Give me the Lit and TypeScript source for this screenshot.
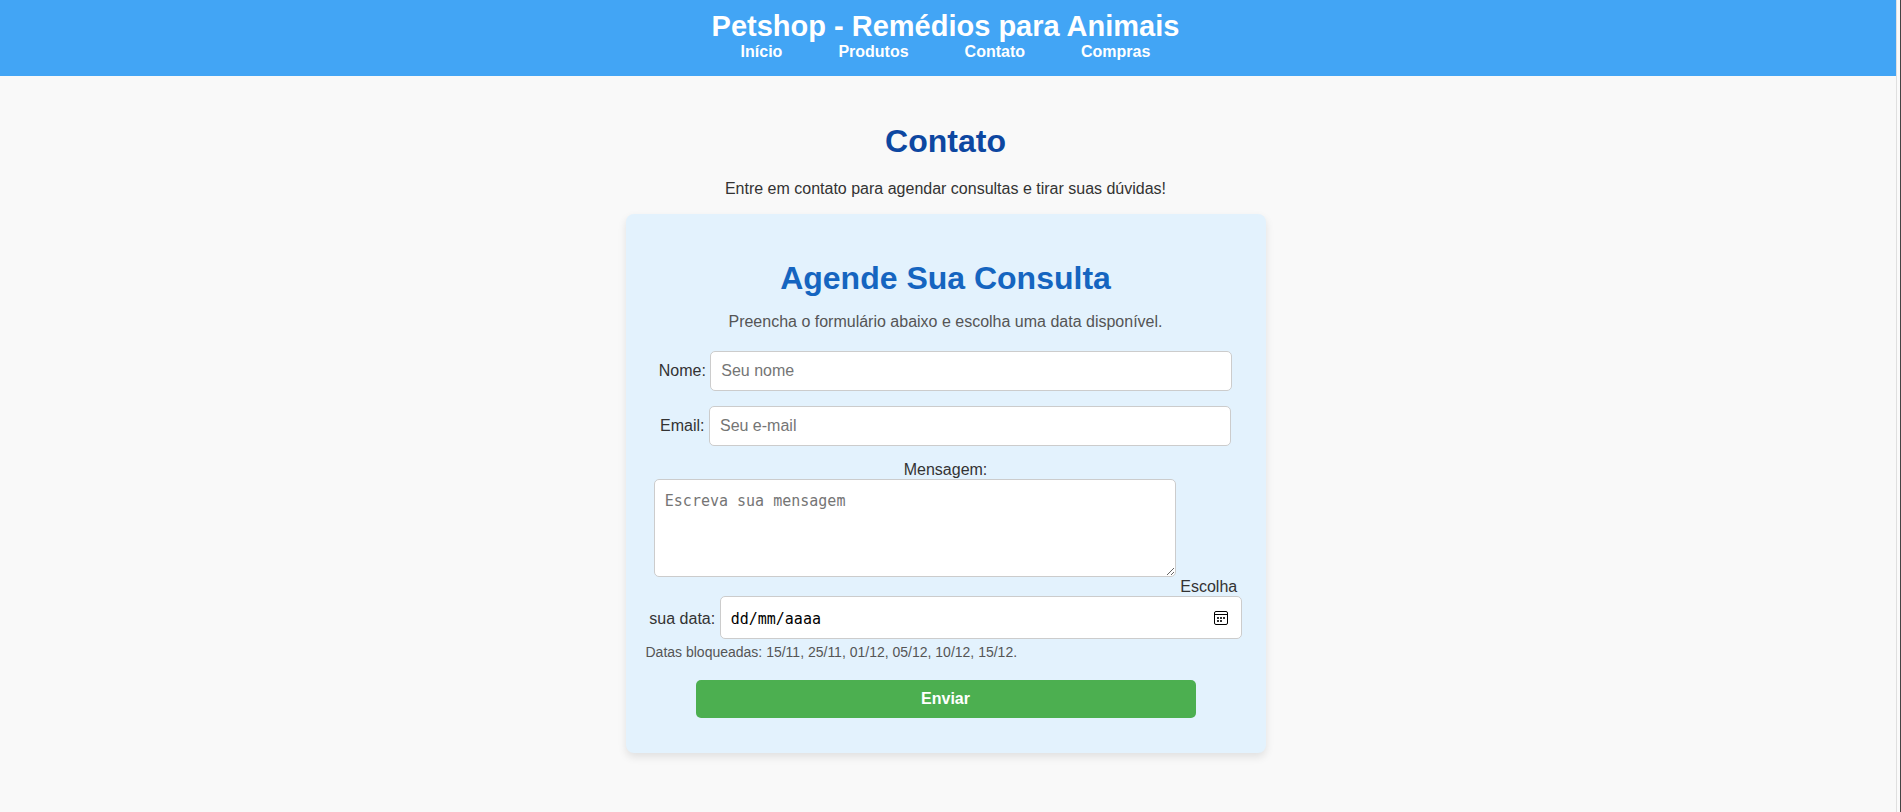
import { LitElement, html, css } from "lit";
import { customElement } from "lit/decorators.js";

@customElement("app-root")
export class AppRoot extends LitElement {
  static styles = css`
    :host {
      display: flex;
      min-height: 100vh;
      font: 16px "Liberation Sans", Arial, sans-serif;
      color: #333;
      background: #f9f9f9;
    }
    .page {
      flex: 1;
      text-align: center;
    }
    .edge {
      width: 1px;
      border-left: 1px solid #e0e0e0;
      border-right: 1px solid #444;
      padding-right: 2px;
      background: #fafafa;
    }
    header {
      padding: 10px 5px 15px 0;
      background: #42a5f5;
      color: #fff;
    }
    .brand {
      margin: 0;
      font-size: 29px;
      line-height: 33px;
    }
    nav {
      display: flex;
      justify-content: center;
      gap: 56px;
      line-height: 18px;
    }
    nav a {
      color: #fff;
      font-weight: bold;
      text-decoration: none;
    }
    main {
      padding: 20px 5px 20px 0;
    }
    .title,
    .form-title {
      font-size: 32px;
      line-height: 37px;
    }
    .title {
      margin: 27px 0 20px;
      color: #0d47a1;
    }
    .lead {
      margin: 0 0 16px;
      line-height: 18px;
    }
    .card {
      box-sizing: border-box;
      max-width: 640px;
      margin: 0 auto;
      padding: 20px;
      border-radius: 8px;
      background: #e3f2fd;
      box-shadow: 0 4px 8px rgba(0, 0, 0, 0.1);
    }
    .form-title {
      margin: 26px 0 16px;
      color: #1565c0;
    }
    .hint {
      margin: 0 0 20px;
      line-height: 18px;
      color: #555;
    }
    .field {
      box-sizing: border-box;
      width: 522px;
      max-width: 100%;
      margin: 0 0 15px;
      padding: 10px;
      border: 1px solid #ccc;
      border-radius: 5px;
      background: #fff;
      font: inherit;
      line-height: 18px;
    }
    input.field {
      height: 40px;
    }
    .field.mono {
      font-family: "DejaVu Sans Mono", monospace;
      font-size: 15px;
      line-height: 22px;
    }
    textarea.field {
      height: 98px;
    }
    .date-box {
      position: relative;
      display: inline-block;
    }
    input.date {
      height: 43px;
      padding-top: 12px;
    }
    .date::placeholder {
      color: #000;
    }
    .picker {
      position: absolute;
      top: 14px;
      right: 13px;
      width: 16px;
      height: 16px;
      padding: 0;
      border: 0;
      background: none;
    }
    .picker svg {
      display: block;
    }
    .blocked {
      margin: -10px 0 20px;
      font-size: 14px;
      line-height: 16px;
      text-align: left;
      color: #555;
    }
    .send {
      display: block;
      width: 500px;
      max-width: 100%;
      margin: 0 auto 15px;
      padding: 10px;
      border: 0;
      border-radius: 5px;
      background: #4caf50;
      color: #fff;
      font: bold 16px "Liberation Sans", Arial, sans-serif;
      line-height: 18px;
    }
  `;

  render() {
    return html`
      <div class="page">
        <header>
          <h1 class="brand">Petshop - Remédios para Animais</h1>
          <nav>
            <a href="#inicio">Início</a>
            <a href="#produtos">Produtos</a>
            <a href="#contato">Contato</a>
            <a href="#compras">Compras</a>
          </nav>
        </header>
        <main>
          <h1 class="title">Contato</h1>
          <p class="lead">Entre em contato para agendar consultas e tirar suas dúvidas!</p>
          <section class="card">
            <h2 class="form-title">Agende Sua Consulta</h2>
            <p class="hint">Preencha o formulário abaixo e escolha uma data disponível.</p>
            <form>
              <label for="nome">Nome:</label>
              <input class="field" id="nome" type="text" placeholder="Seu nome" />
              <label for="email">Email:</label>
              <input class="field" id="email" type="email" placeholder="Seu e-mail" />
              <label for="mensagem">Mensagem:</label>
              <textarea class="field mono" id="mensagem" placeholder="Escreva sua mensagem"></textarea>
              <label for="data">Escolha sua data:</label>
              <span class="date-box"
                ><input class="field mono date" id="data" type="text" inputmode="numeric" placeholder="dd/mm/aaaa" /><button
                  class="picker"
                  type="button"
                  aria-label="Abrir calendário"
                >
                  <svg width="16" height="16" viewBox="0 0 16 16">
                    <rect x="1.5" y="1.5" width="13" height="13" rx="1.5" fill="none" stroke="#000" />
                    <path d="M1.5 4.5h13" stroke="#000" />
                    <path
                      d="M4 7h2v2H4zM7 7h2v2H7zM10 7h2v2h-2zM4 10h2v2H4zM7 10h2v2H7z"
                      fill="#333"
                    />
                  </svg></button
              ></span>
              <p class="blocked">Datas bloqueadas: 15/11, 25/11, 01/12, 05/12, 10/12, 15/12.</p>
              <button class="send" type="submit">Enviar</button>
            </form>
          </section>
        </main>
      </div>
      <div class="edge"></div>
    `;
  }
}
